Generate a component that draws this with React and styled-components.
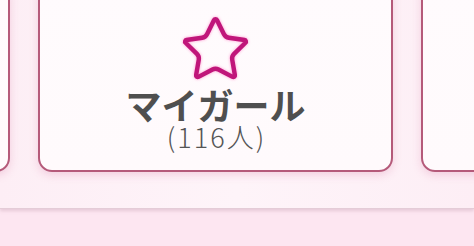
import React from "react";
import styled, { createGlobalStyle } from "styled-components";

const Global = createGlobalStyle`
  html, body { margin: 0; padding: 0; }
  body {
    width: 474px;
    height: 246px;
    overflow: hidden;
    background: #fde7f1;
    font-family: "Noto Sans CJK JP", "Noto Sans", sans-serif;
  }
`;

const Page = styled.div`
  width: 474px;
  height: 246px;
  display: flex;
  flex-direction: column;
  background: #fde6f1;
`;

const Shelf = styled.section`
  height: 208px;
  flex: none;
  overflow: hidden;
  background: linear-gradient(90deg, #fdeef5 0%, #fef4f9 50%, #fdeef5 100%);
  border-bottom: 1px solid #e4ccd7;
  box-shadow: 0 2px 3px rgba(190, 150, 170, 0.35);
  position: relative;
  z-index: 1;
`;

const Row = styled.div`
  display: flex;
  gap: 28px;
  margin-left: -345px;
  margin-top: -20px;
`;

const Card = styled.div`
  flex: none;
  width: 355px;
  height: 192px;
  box-sizing: border-box;
  border: 2px solid #b55a7a;
  border-radius: 14px;
  background: linear-gradient(180deg, #fffbfd 0%, #fffafc 100%);
  box-shadow: 0 3px 8px rgba(220, 130, 170, 0.3);
  display: flex;
  flex-direction: column;
  align-items: center;
  padding-top: 31px;
`;

const StarIcon = styled.svg`
  width: 73px;
  height: 73px;
  display: block;
  filter: drop-shadow(0 0 1.5px rgba(255, 110, 190, 0.7));
`;

const Title = styled.div`
  margin-top: 1px;
  font-size: 36px;
  font-weight: 700;
  color: #4f4f4f;
  line-height: 34px;
`;

const Count = styled.div`
  margin-top: 2px;
  font-size: 27px;
  font-weight: 300;
  color: #555;
  line-height: 28px;
  letter-spacing: 2px;
  padding-left: 2px;
`;

const Star = () => (
  <StarIcon viewBox="0 0 24 24" fill="none" stroke="#c0167a" strokeWidth="1.45" strokeLinecap="round" strokeLinejoin="round">
    <path d="M11.525 2.295a.53.53 0 0 1 .95 0l2.31 4.679a2.123 2.123 0 0 0 1.595 1.16l5.166.756a.53.53 0 0 1 .294.904l-3.736 3.638a2.123 2.123 0 0 0-.611 1.878l.882 5.14a.53.53 0 0 1-.771.56l-4.618-2.428a2.122 2.122 0 0 0-1.973 0L6.396 21.01a.53.53 0 0 1-.77-.56l.881-5.139a2.122 2.122 0 0 0-.611-1.879L2.160 9.795a.53.53 0 0 1 .294-.906l5.165-.755a2.122 2.122 0 0 0 1.597-1.160z" />
  </StarIcon>
);

export default function App() {
  return (
    <>
      <Global />
      <Page>
        <Shelf>
          <Row>
            <Card />
            <Card>
              <Star />
              <Title>マイガール</Title>
              <Count>(116人)</Count>
            </Card>
            <Card />
          </Row>
        </Shelf>
      </Page>
    </>
  );
}
